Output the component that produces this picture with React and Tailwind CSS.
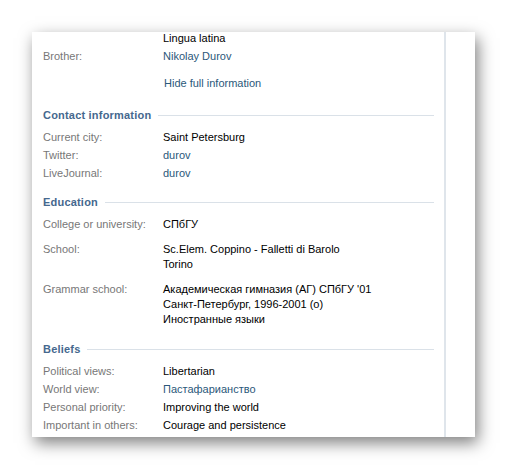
export default function App() {
  const font = { fontFamily: "'Liberation Sans', Arial, sans-serif" };

  const Header = ({ title, className }) => (
    <div className={`flex items-center gap-[7px] leading-[18px] ${className}`}>
      <span className="font-bold text-[#45688e] tracking-[0.2px]">{title}</span>
      <div className="h-px flex-1 bg-[#dae1e8]"></div>
    </div>
  );

  const Row = ({ label, children, className = "", lead = "leading-[18px]" }) => (
    <div className={`flex ${lead} ${className}`}>
      <div className="w-[120px] shrink-0 text-[#777777]">{label}</div>
      <div className="flex-1">{children}</div>
    </div>
  );

  const link = "text-[#2b587a]";

  return (
    <div className="w-[507px] h-[469px] bg-white pt-[32px] pl-[32px]" style={font}>
      <div className="flex w-[443px] h-[405px] overflow-hidden bg-white shadow-[3px_6px_15px_rgba(0,0,0,0.5)] text-[11px] text-black">
        {/* Main column */}
        <div className="w-[414px] shrink-0 border-r-2 border-[#dfe5eb] pl-[11px] pr-[10px]">
          <Row label="" className="mt-[-3px]">Lingua latina</Row>
          <Row label="Brother:">
            <span className={link}>Nikolay Durov</span>
          </Row>
          <Row label="" className="mt-[9px]">
            <span className={`${link} pl-px`}>Hide full information</span>
          </Row>

          <Header title="Contact information" className="mt-[14px]" />
          <Row label="Current city:" className="mt-[4px]">Saint Petersburg</Row>
          <Row label="Twitter:">
            <span className={link}>durov</span>
          </Row>
          <Row label="LiveJournal:">
            <span className={link}>durov</span>
          </Row>

          <Header title="Education" className="mt-[11px]" />
          <Row label="College or university:" lead="leading-[15px]" className="mt-[6px]">
            СПбГУ
          </Row>
          <Row label="School:" lead="leading-[15px]" className="mt-[10px]">
            <div>Sc.Elem. Coppino - Falletti di Barolo</div>
            <div>Torino</div>
          </Row>
          <Row label="Grammar school:" lead="leading-[15px]" className="mt-[10px]">
            <div>Академическая гимназия (АГ) СПбГУ '01</div>
            <div>Санкт-Петербург, 1996-2001 (о)</div>
            <div>Иностранные языки</div>
          </Row>

          <Header title="Beliefs" className="mt-[13px]" />
          <Row label="Political views:" className="mt-[4px]">Libertarian</Row>
          <Row label="World view:">
            <span className={link}>Пастафарианство</span>
          </Row>
          <Row label="Personal priority:">Improving the world</Row>
          <Row label="Important in others:">Courage and persistence</Row>
        </div>
        {/* Side column */}
        <div className="flex-1"></div>
      </div>
    </div>
  );
}
